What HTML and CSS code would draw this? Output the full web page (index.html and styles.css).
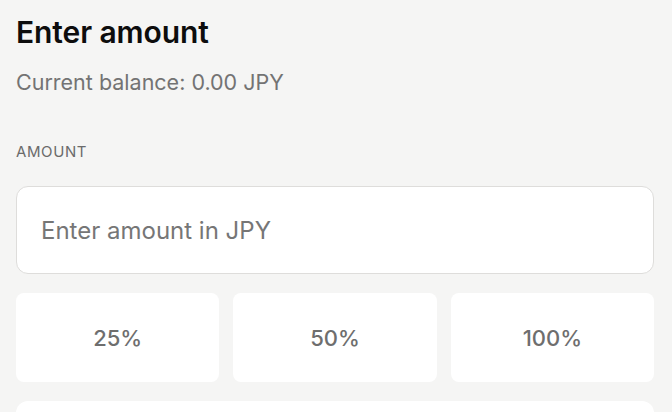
FILE: index.html
```html
<!DOCTYPE html>
<html lang="en">
<head>
<meta charset="utf-8">
<title>Enter amount</title>
<link rel="stylesheet" href="styles.css">
</head>
<body>
<main class="page">
  <h1 class="title">Enter amount</h1>
  <p class="balance">Current balance: 0.00 JPY</p>
  <label class="label" for="amount">AMOUNT</label>
  <div class="field">
    <input id="amount" class="input" type="text" placeholder="Enter amount in JPY">
  </div>
  <div class="presets">
    <button class="preset">25%</button>
    <button class="preset">50%</button>
    <button class="preset">100%</button>
  </div>
  <div class="next-card"></div>
</main>
</body>
</html>
```

FILE: styles.css
```css
* { box-sizing: border-box; }
html, body {
  margin: 0;
  padding: 0;
  background: #f5f5f4;
  font-family: Inter, "Noto Sans", sans-serif;
  overflow: hidden;
}
.page {
  padding: 14px 18px 0 16px;
  display: flex;
  flex-direction: column;
}
.title {
  margin: 0;
  font-size: 30px;
  line-height: 36px;
  font-weight: 600;
  color: #0d0d0d;
  letter-spacing: -0.1px;
}
.balance {
  margin: 19px 0 0;
  font-size: 21.5px;
  line-height: 26px;
  color: #737373;
}
.label {
  margin-top: 47px;
  font-size: 15px;
  line-height: 20px;
  letter-spacing: 0.6px;
  color: #6b6b6b;
}
.field {
  margin-top: 24px;
}
.input {
  display: block;
  width: 100%;
  height: 88px;
  border: 1px solid #dedddb;
  border-radius: 12px;
  background: #fff;
  padding: 0 24px;
  font-family: inherit;
  font-size: 24px;
  color: #111;
  outline: none;
}
.input::placeholder { color: #767676; }
.presets {
  margin-top: 19px;
  display: grid;
  grid-template-columns: repeat(3, 1fr);
  gap: 14px;
}
.preset {
  height: 89px;
  border: none;
  border-radius: 8px;
  background: #fff;
  font-family: inherit;
  font-size: 22px;
  font-weight: 500;
  color: #6e6e6e;
}
.next-card {
  margin-top: 19px;
  height: 60px;
  border-radius: 12px;
  background: #fff;
}
```
